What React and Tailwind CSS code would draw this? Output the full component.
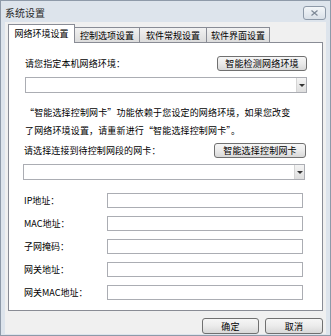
import React from 'react'

const font = "font-['Noto_Sans_CJK_SC','Noto_Sans',sans-serif]"

const Btn = ({ w, children }) => (
  <div className={`${w} h-[15px] flex items-center justify-center rounded-[3px] border border-[#707070] bg-gradient-to-b from-[#f6f6f6] via-[#ebebeb] to-[#d8d8d8] text-[9px] leading-none tracking-[0.2px] text-black`}>
    {children}
  </div>
)

const Select = ({ ml }) => (
  <div className={`${ml} mt-0 h-[16px] w-[282px] border border-[#abadb3] bg-white flex justify-end`}>
    <div className="w-[10px] h-full border-l border-[#d5d5d5] bg-gradient-to-b from-[#f4f4f4] to-[#dedede] flex items-center justify-center">
      <div className="w-0 h-0 border-l-[3px] border-r-[3px] border-t-[3px] border-l-transparent border-r-transparent border-t-[#333]"></div>
    </div>
  </div>
)

const Field = ({ label, first }) => (
  <div className={`flex items-center h-[15px] ${first ? 'mt-[13px]' : 'mt-[8px]'}`}>
    <div className="w-[98px] pl-[15px] text-[9px] leading-none">{label}</div>
    <div className="w-[196px] h-[15px] border border-[#abadb3] bg-white"></div>
  </div>
)

const App = () => {
  const tabBase = "h-[15px] -ml-px flex items-center justify-center border border-b-0 border-[#898c95] bg-gradient-to-b from-[#f2f2f2] to-[#dcdcdc] text-[9px] leading-none"

  return (
    <div className={`w-[331px] h-[336px] flex flex-col border border-[#8e9aa9] bg-[#dde4ec] text-black ${font}`}>
      <div className="h-[21px] flex items-center justify-between pl-[4px] pr-[4px] pt-[2px]">
        <span className="text-[10px] leading-none text-[#2a2a2a]">系统设置</span>
        <div className="w-[23px] h-[14px] rounded-[3px] border border-[#8d99a8] bg-gradient-to-b from-[#f3f6f9] to-[#d9e0e8] flex items-center justify-center">
          <svg width="7" height="6" viewBox="0 0 7 6">
            <path d="M0.5 0.5 L6.5 5.5 M6.5 0.5 L0.5 5.5" stroke="#7d8896" strokeWidth="1.2" fill="none" />
          </svg>
        </div>
      </div>

      <div className="flex-1 mx-[4px] mb-px bg-[#f0f0f0] flex flex-col px-[3px]">
        <div className="flex items-end pt-[2px] h-[20px]">
          <div className="relative z-10 w-[67px] h-[19px] -mb-px flex items-start justify-center pt-[4px] border border-b-0 border-[#898c95] bg-white text-[9px] leading-none">
            网络环境设置
          </div>
          <div className={`${tabBase} w-[66px]`}>控制选项设置</div>
          <div className={`${tabBase} w-[68px]`}>软件常规设置</div>
          <div className={`${tabBase} w-[64px]`}>软件界面设置</div>
        </div>

        <div className="h-[269px] border border-[#898c95] bg-white flex flex-col">
          <div className="mt-[13px] h-[15px] flex items-center justify-between pl-[16px] pr-[15px]">
            <span className="text-[9px] leading-none tracking-[0.1px]">请您指定本机网络环境：</span>
            <Btn w="w-[90px]">智能检测网络环境</Btn>
          </div>
          <div className="mt-[6px]">
            <Select ml="ml-[16px]" />
          </div>
          <div className="mt-[11px] pl-[16px] pr-[10px] text-[9px] leading-[18px] tracking-[0.15px]">
            <div>“智能选择控制网卡”功能依赖于您设定的网络环境，如果您改变</div>
            <div>了网络环境设置，请重新进行“智能选择控制网卡”。</div>
          </div>
          <div className="mt-[3px] h-[15px] flex items-center justify-between pl-[15px] pr-[16px]">
            <span className="text-[9px] leading-none tracking-[0.1px]">请选择连接到待控制网段的网卡：</span>
            <Btn w="w-[92px]">智能选择控制网卡</Btn>
          </div>
          <div className="mt-[6px]">
            <Select ml="ml-[14px]" />
          </div>
          <Field label="IP地址：" first />
          <Field label="MAC地址：" />
          <Field label="子网掩码：" />
          <Field label="网关地址：" />
          <Field label="网关MAC地址：" />
        </div>

        <div className="mt-[7px] flex justify-end gap-[6px]">
          <Btn w="w-[57px] h-[16px]">确定</Btn>
          <Btn w="w-[58px] h-[16px]">取消</Btn>
        </div>
      </div>
    </div>
  )
}

export default App
